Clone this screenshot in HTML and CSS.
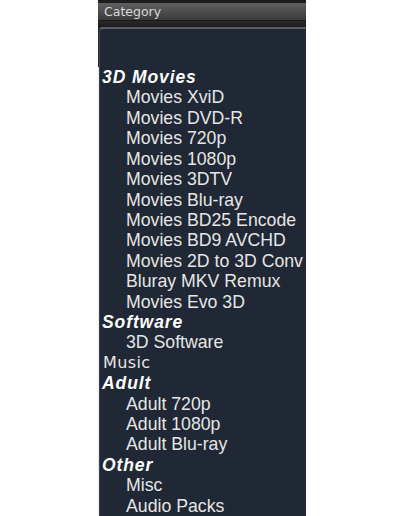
FILE: index.html
```html
<!DOCTYPE html>
<html>
<head>
<meta charset="utf-8">
<link rel="stylesheet" href="styles.css">
</head>
<body>
<div class="panel">
  <div class="topline"></div>
  <div class="header">Category</div>
  <div class="band"></div>
  <div class="list">
    <div class="spacer"></div>
    <div class="group">3D Movies</div>
    <div class="item">Movies XviD</div>
    <div class="item">Movies DVD-R</div>
    <div class="item">Movies 720p</div>
    <div class="item">Movies 1080p</div>
    <div class="item">Movies 3DTV</div>
    <div class="item">Movies Blu-ray</div>
    <div class="item">Movies BD25 Encode</div>
    <div class="item">Movies BD9 AVCHD</div>
    <div class="item">Movies 2D to 3D Conv</div>
    <div class="item">Bluray MKV Remux</div>
    <div class="item">Movies Evo 3D</div>
    <div class="group">Software</div>
    <div class="item">3D Software</div>
    <div class="plain">Music</div>
    <div class="group">Adult</div>
    <div class="item">Adult 720p</div>
    <div class="item">Adult 1080p</div>
    <div class="item">Adult Blu-ray</div>
    <div class="group">Other</div>
    <div class="item">Misc</div>
    <div class="item">Audio Packs</div>
  </div>
</div>
</body>
</html>
```
FILE: styles.css
```css
html, body {
  margin: 0;
  padding: 0;
  background: #ffffff;
  height: 516px;
  overflow: hidden;
}
.panel {
  margin-left: 98px;
  width: 208px;
  height: 516px;
  background: linear-gradient(#262626 67px, #e8e8e8 67px);
  display: flex;
  flex-direction: column;
}
.topline {
  height: 3px;
  background: #1c1c1c;
}
.header {
  height: 17px;
  background: linear-gradient(#5e5e5e, #4a4a4a 60%, #3a3a3a);
  color: #d8d8d8;
  font-family: "DejaVu Sans", sans-serif;
  font-size: 12.5px;
  line-height: 18px;
  padding-left: 6px;
  border-bottom: 1px solid #1a1a1a;
}
.band {
  height: 7px;
  background: linear-gradient(#2a2a2a, #1c1c1c);
}
.list {
  flex: 1;
  margin-left: 1px;
  background: #1f2834;
  border-top: 2px solid #5a5f66;
  border-left: 1px solid #3c4450;
  border-top-left-radius: 4px;
  color: #e6e6e6;
  font-family: "Liberation Sans", Arial, sans-serif;
  font-size: 17.7px;
  line-height: 20.4px;
}
.spacer {
  height: 38px;
}
.group {
  font-weight: bold;
  font-style: italic;
  color: #ffffff;
  padding-left: 2px;
  font-size: 17.5px;
  letter-spacing: 0.9px;
}
.item {
  padding-left: 26px;
}
.plain {
  font-family: "DejaVu Sans", sans-serif;
  font-size: 16px;
  padding-left: 3px;
  letter-spacing: 0.4px;
}
```
